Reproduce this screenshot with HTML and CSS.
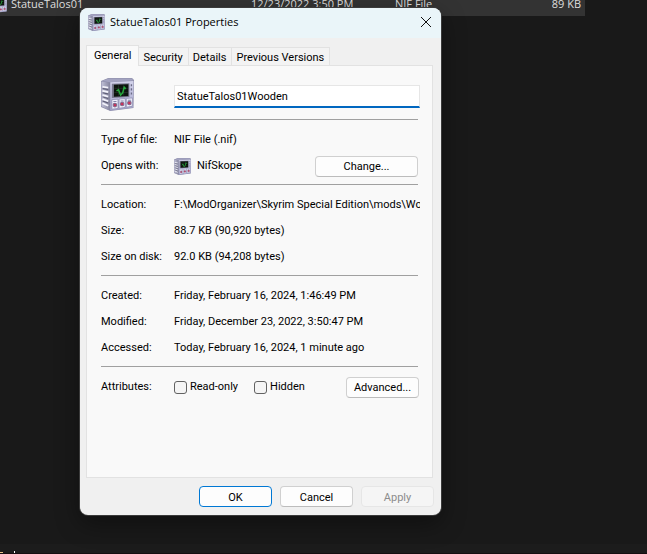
FILE: index.html
```html
<!DOCTYPE html>
<html lang="en">
<head>
<meta charset="utf-8">
<title>StatueTalos01 Properties</title>
<link rel="stylesheet" href="styles.css">
</head>
<body>
<svg class="defs" aria-hidden="true">
  <defs>
    <linearGradient id="front" x1="0" y1="0" x2="0" y2="1"><stop offset="0" stop-color="#d4d4ec"/><stop offset="1" stop-color="#a4a4cc"/></linearGradient>
    <linearGradient id="side" x1="0" y1="0" x2="1" y2="0"><stop offset="0" stop-color="#c0c0d6"/><stop offset="1" stop-color="#85859f"/></linearGradient>
    <symbol id="scope" viewBox="0 0 32 32">
      <path d="M0 3 7 0 30 0 32 2 31.500 29 9 32 0 28Z" fill="#8c8ca8"/>
      <path d="M1 3 7 .5 30 .5 31.500 2.500 9 4Z" fill="#a3a3c0"/>
      <path d="M.5 3.500 8.500 4.500 8.500 31.500.5 27.500Z" fill="url(#side)"/>
      <path d="M1.500 8.500l5.500.8M1.500 12.500l5.500 1.200M1.500 16.500l5.500 1.600M1.500 20.500l5.500 2M1.500 24.500l5.500 2.500" stroke="#f4f4fc" stroke-width="1.600"/>
      <path d="M1.500 10.300l5.500.8M1.500 14.300l5.500 1.200M1.500 18.300l5.500 1.600M1.500 22.300l5.500 2" stroke="#5c5c74"/>
      <path d="M9 4.200 31.500 3 31 28.500 9 31.500Z" fill="url(#front)"/>
      <path d="M10.500 5.500 27.500 5 27.500 18.500 10.500 19.500Z" fill="#77778c"/>
      <path d="M12.500 6.500 26.500 6 26.500 17.500 12.500 18.300Z" fill="#0c140e"/>
      <path d="M13 10h13M13 14h13M17 7v10M22 7v10" stroke="#2c3c30" stroke-width=".6"/>
      <path d="M15 12.500 17 11.500 19 16.500 21 14.500 22.500 9 24 10.500" fill="none" stroke="#26a83c" stroke-width="1.500"/>
      <path d="M29.500 6v12" stroke="#6c6c86" stroke-width="1.300" stroke-dasharray="2 2"/>
      <path d="M10.500 21 16.500 20.500 16.500 29.500 10.500 30.300ZM17.500 20.400 23.500 19.900 23.500 28.500 17.500 29.400ZM24.500 19.800 30.500 19.300 30.300 27.500 24.500 28.300Z" fill="#eeeefa" stroke="#9090b4" stroke-width=".8"/>
      <path d="M12 22.800h3M19 22.200h3M26 21.600h3" stroke="#8484aa"/>
      <g fill="#cc3058" stroke="#81698b"><circle cx="13.500" cy="26.300" r="1.700"/><circle cx="20.500" cy="25.300" r="1.700"/><circle cx="27.500" cy="24.300" r="1.700"/></g>
    </symbol>
  </defs>
</svg>

<main class="desktop">
  <table class="files">
    <colgroup><col class="col-name"><col class="col-date"><col class="col-type"><col class="col-size"></colgroup>
    <tbody>
      <tr>
        <td><span class="file"><svg class="icon-small"><use href="#scope"/></svg>StatueTalos01</span></td>
        <td>12/23/2022 3:50 PM</td>
        <td>NIF File</td>
        <td class="size">89 KB</td>
      </tr>
    </tbody>
  </table>
  <div class="statusbar"><i class="mark"></i><i class="caret"></i></div>

  <section class="dialog" role="dialog" aria-labelledby="title">
    <header class="titlebar">
      <svg class="icon-small" aria-hidden="true"><use href="#scope"/></svg>
      <h1 id="title">StatueTalos01 Properties</h1>
      <button class="close" aria-label="Close"><svg viewBox="0 0 12 12"><path d="M1 1 11 11M11 1 1 11"/></svg></button>
    </header>

    <div class="tabs" role="tablist">
      <button class="tab active" role="tab" aria-selected="true">General</button>
      <button class="tab" role="tab">Security</button>
      <button class="tab" role="tab">Details</button>
      <button class="tab" role="tab">Previous Versions</button>
    </div>

    <div class="panel" role="tabpanel">
      <div class="row heading">
        <svg class="icon-large" aria-hidden="true"><use href="#scope"/></svg>
        <input class="name" type="text" value="StatueTalos01Wooden" aria-label="File name">
      </div>
      <div class="group">
        <div class="row"><span>Type of file:</span><span>NIF File (.nif)</span></div>
        <div class="row"><span>Opens with:</span><span class="program"><svg class="icon-small" aria-hidden="true"><use href="#scope"/></svg>NifSkope<button class="btn wide">Change...</button></span></div>
      </div>
      <div class="group">
        <div class="row"><span>Location:</span><span class="path">F:\ModOrganizer\Skyrim Special Edition\mods\Woo</span></div>
        <div class="row"><span>Size:</span><span>88.7 KB (90,920 bytes)</span></div>
        <div class="row"><span>Size on disk:</span><span>92.0 KB (94,208 bytes)</span></div>
      </div>
      <div class="group">
        <div class="row"><span>Created:</span><span>Friday, February 16, 2024, 1:46:49 PM</span></div>
        <div class="row"><span>Modified:</span><span>Friday, December 23, 2022, 3:50:47 PM</span></div>
        <div class="row"><span>Accessed:</span><span>Today, February 16, 2024, 1 minute ago</span></div>
      </div>
      <div class="group">
        <div class="row"><span>Attributes:</span>
          <div class="attributes">
            <label><input type="checkbox">Read-only</label>
            <label><input type="checkbox">Hidden</label>
            <button class="btn">Advanced...</button>
          </div>
        </div>
      </div>
    </div>

    <footer class="actions">
      <button class="btn primary">OK</button>
      <button class="btn">Cancel</button>
      <button class="btn" disabled>Apply</button>
    </footer>
  </section>
</main>
</body>
</html>
```
FILE: styles.css
```css
* { box-sizing: border-box; }

body {
  margin: 0;
  background: #191919;
  color: #000;
  font: 11px/16px Roboto, "Liberation Sans", sans-serif;
}

button, input { font: inherit; color: inherit; margin: 0; }

.defs { position: absolute; width: 0; height: 0; }
.icon-small { width: 17px; height: 17px; flex: none; display: block; }
.icon-large { width: 33px; height: 33px; margin-top: 4px; display: block; }

.desktop {
  position: relative;
  display: flex;
  flex-direction: column;
  justify-content: space-between;
  height: 100vh;
  overflow: hidden;
}

.files {
  width: 585px;
  margin-top: -8px;
  border-collapse: collapse;
  table-layout: fixed;
  background: #333;
  color: #dedede;
  font: 11px/16px "Open Sans", sans-serif;
}
.files td { height: 24px; padding: 0 4px 0 0; white-space: nowrap; }
.files .size { text-align: right; }
.col-name { width: 251px; }
.col-date { width: 144px; }
.col-type { width: 80px; }
.file { display: flex; align-items: center; gap: 4px; margin-left: -10px; }

.statusbar {
  display: flex;
  align-items: flex-end;
  gap: 11px;
  height: 10px;
  background: #1c1c1c;
  border-bottom: 1px solid #140e10;
}
.mark { width: 3px; height: 1px; background: #e8c489; }
.caret { width: 1px; height: 2px; background: #fff; }

.dialog {
  position: absolute;
  left: 80px;
  top: 8px;
  width: 361px;
  border-radius: 8px;
  overflow: hidden;
  background: #f0f0f0;
  box-shadow: 0 0 0 1px #3a3a3a, 0 8px 24px rgba(0, 0, 0, .4);
}

.titlebar {
  display: flex;
  align-items: center;
  gap: 5px;
  height: 30px;
  padding: 0 9px 2px 8px;
  background: #eaf5f9;
}
.titlebar h1 { flex: 1; margin: 0; font: 11px/16px "Open Sans", sans-serif; }
.close { width: 12px; height: 12px; padding: 0; border: 0; background: none; }
.close svg { display: block; fill: none; stroke: #111; }

.tabs { display: flex; align-items: flex-end; height: 27px; padding: 0 6px; }
.tab {
  height: 18px;
  padding: 2px 5px 0 4px;
  border: 1px solid #e2e2e2;
  border-width: 1px 1px 0 0;
  background: #f3f3f3;
}
.tab.active {
  position: relative;
  z-index: 1;
  height: 21px;
  margin-bottom: -1px;
  padding: 0 7px 1px;
  border-left-width: 1px;
  background: #f9f9f9;
}

.panel {
  min-height: 413px;
  margin: 0 8px 0 6px;
  padding: 0 12px 0 14px;
  border: 1px solid #e2e2e2;
  background: #f9f9f9;
}
.row {
  display: grid;
  grid-template-columns: 73px minmax(0, 1fr);
  align-items: center;
  height: 26px;
  white-space: nowrap;
}
.heading { height: 53px; }
.name {
  width: 100%;
  height: 23px;
  margin-top: 8px;
  padding: 0 2px;
  border: 1px solid #e6e6e6;
  border-bottom: 2px solid #0067c0;
  background: #fff;
  outline: 0;
}
.group { padding: 7px 0 5px; border-top: 1px solid #a0a0a0; margin-right: 2px; }
.path { margin-right: -2px; overflow: hidden; }
.program { display: flex; align-items: center; gap: 6px; }
.program .btn, .attributes .btn { margin-left: auto; }
.attributes { display: flex; align-items: center; gap: 16px; margin-right: -1px; }
.attributes label { display: flex; align-items: center; gap: 3px; }
.attributes input {
  appearance: none;
  width: 13px;
  height: 13px;
  border: 1px solid #626262;
  border-radius: 3px;
  background: #f5f5f5;
}

.btn {
  width: 73px;
  height: 21px;
  padding: 2px 0 0;
  border: 1px solid #d0d0d0;
  border-bottom-color: #bcbcbc;
  border-radius: 4px;
  background: #fdfdfd;
}
.btn.wide { width: 103px; }
.btn.primary { border-color: #0078d4; }
.btn:disabled { border-color: #e6e6e6; background: #f5f5f5; color: #8c8c8c; }

.actions { display: flex; justify-content: flex-end; gap: 8px; padding: 8px 7px; }
```
